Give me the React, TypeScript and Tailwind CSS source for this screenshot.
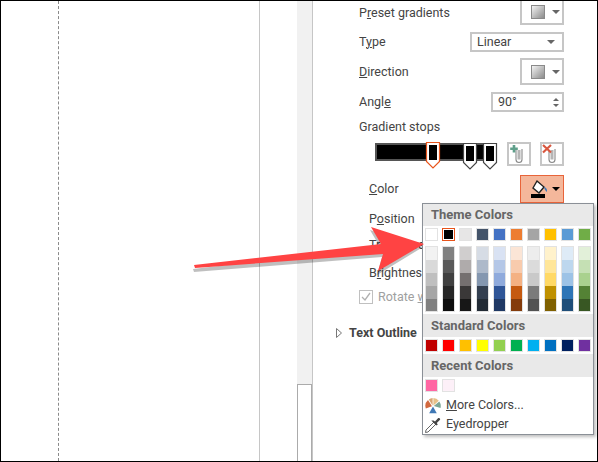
import React from "react";

const theme = ["#FFFFFF", "#000000", "#E7E6E6", "#44546A", "#4472C4", "#ED7D31", "#A5A5A5", "#FFC000", "#5B9BD5", "#70AD47"];
const shades = [
  ["#F2F2F2", "#D9D9D9", "#BFBFBF", "#A6A6A6", "#808080"],
  ["#808080", "#595959", "#404040", "#262626", "#0D0D0D"],
  ["#D0CECE", "#AFABAB", "#757070", "#3A3838", "#171717"],
  ["#D6DCE5", "#ADB9CA", "#8497B0", "#333F50", "#222B35"],
  ["#D9E2F3", "#B4C7E7", "#8FAADC", "#2F5597", "#1F3864"],
  ["#FBE5D6", "#F8CBAD", "#F4B183", "#C55A11", "#843C0C"],
  ["#EDEDED", "#DBDBDB", "#C9C9C9", "#7B7B7B", "#525252"],
  ["#FFF2CC", "#FFE699", "#FFD966", "#BF9000", "#7F6000"],
  ["#DEEBF7", "#BDD7EE", "#9DC3E6", "#2E75B6", "#1F4E79"],
  ["#E2F0D9", "#C5E0B4", "#A9D18E", "#548235", "#385723"],
];
const standard = ["#C00000", "#FF0000", "#FFC000", "#FFFF00", "#92D050", "#00B050", "#00B0F0", "#0070C0", "#002060", "#7030A0"];

function Swatch({ color, selected }: { color: string; selected?: boolean }) {
  return (
    <div
      className={selected ? "w-[13px] h-[13px] border border-[#E8541B] p-px bg-white" : "w-[13px] h-[13px] border border-[#E2E2E2] bg-white"}
    >
      <div className="w-full h-full" style={{ background: color }} />
    </div>
  );
}

function Caret() {
  return <div className="w-0 h-0 border-l-[4px] border-r-[4px] border-t-[4px] border-l-transparent border-r-transparent border-t-[#666]" />;
}

function GradientSquare() {
  return <div className="w-[14px] h-[14px] border border-[#8a8a8a] bg-gradient-to-br from-[#f4f4f4] to-[#8c8c8c]" />;
}

function IconButton({ noTop, h }: { noTop?: boolean; h: string }) {
  return (
    <div className={`${h} w-[44px] border-2 border-[#c6c6c6] ${noTop ? "border-t-0" : ""} flex items-center gap-[7px] pl-[9px] bg-white`}>
      <GradientSquare />
      <Caret />
    </div>
  );
}

function Clip({ kind }: { kind: "add" | "remove" }) {
  return (
    <svg width="20" height="20" viewBox="0 0 20 20">
      <path d="M7 6v9.500a3 3 0 0 0 6 0V5" fill="#fff" stroke="#8a8a8a" strokeWidth="1.1" />
      <path d="M10 6v9.500" stroke="#b5b5b5" strokeWidth="3" />
      {kind === "add" ? (
        <path d="M5 1v7.500M1.200 4.800h7.600" stroke="#5f9f8a" strokeWidth="2.600" />
      ) : (
        <path d="M1 1l8 7.500M9 1L1 8.500" stroke="#d9573f" strokeWidth="2.200" />
      )}
    </svg>
  );
}

function Stop({ selected, cls }: { selected?: boolean; cls: string }) {
  return (
    <svg className={`absolute ${cls}`} width="16" height="28" viewBox="0 0 16 28">
      <path d="M1.500 1.500h13v19L8 27 1.500 20.500z" fill="#fff" stroke={selected ? "#E8541B" : "#444"} strokeWidth="1.200" />
      <rect x="4" y="4" width="8" height="15" fill="#000" />
    </svg>
  );
}

function Heading({ children }: { children: React.ReactNode }) {
  return <div className="h-[23px] bg-[#e9e9e9] flex items-center pl-[8px] font-bold text-[13px] text-[#666]">{children}</div>;
}

export default function App() {
  return (
    <div className="relative w-[598px] h-[462px] border border-black bg-white overflow-hidden flex text-[12.5px] text-[#444]" style={{ fontFamily: "Roboto, sans-serif" }}>
      <div className="w-[58px] h-full border-r border-dashed border-[#8a8a8a] shrink-0" />
      <div className="w-[201px] h-full border-r border-[#c6c6c6] shrink-0" />
      <div className="w-[37px] shrink-0" />
      <div className="w-[16px] h-full bg-[#f1f1f1] border-r border-[#c6c6c6] shrink-0 flex flex-col justify-end">
        <div className="h-[78px] bg-white border border-[#ababab] -mb-px" />
      </div>

      <div className="flex-1 flex flex-col pl-[46px] pr-[33px] relative">
        <div className="h-[24px] flex items-center justify-between shrink-0">
          <span>
            P<u>r</u>eset gradients
          </span>
          <IconButton noTop h="h-[24px]" />
        </div>
        <div className="mt-[7px] h-[20px] flex items-center justify-between shrink-0">
          <span>
            T<u>y</u>pe
          </span>
          <div className="w-[94px] h-[20px] border-2 border-[#c6c6c6] flex items-center justify-between pl-[5px] pr-[7px]">
            <span>Linear</span>
            <Caret />
          </div>
        </div>
        <div className="mt-[6px] h-[27px] flex items-center justify-between shrink-0">
          <span className="pt-[2px]">
            <u>D</u>irection
          </span>
          <IconButton h="h-[27px]" />
        </div>
        <div className="mt-[7px] h-[20px] flex items-center justify-between shrink-0">
          <span>
            Angl<u>e</u>
          </span>
          <div className="w-[73px] h-[20px] border-2 border-[#c6c6c6] flex items-center justify-between pl-[5px] pr-[3px]">
            <span>90°</span>
            <div className="flex flex-col gap-[3px]">
              <div className="w-0 h-0 border-l-[3px] border-r-[3px] border-b-[3px] border-l-transparent border-r-transparent border-b-[#666]" />
              <div className="w-0 h-0 border-l-[3px] border-r-[3px] border-t-[3px] border-l-transparent border-r-transparent border-t-[#666]" />
            </div>
          </div>
        </div>
        <div className="mt-[6px] h-[18px] flex items-center shrink-0">Gradient stops</div>
        <div className="mt-[6px] h-[24px] flex justify-between shrink-0 pl-[16px] relative">
          <div className="w-[120px] h-[18px] mt-px border-2 border-[#555] outline outline-1 outline-white bg-black" />
          <Stop selected cls="left-[66px] -top-[1px]" />
          <Stop cls="left-[103px] top-0" />
          <Stop cls="left-[123px] top-0" />
          <div className="flex gap-[9px] ml-auto">
            <div className="w-[24px] h-[24px] border-2 border-[#c6c6c6] flex items-center justify-center">
              <Clip kind="add" />
            </div>
            <div className="w-[24px] h-[24px] border-2 border-[#c6c6c6] flex items-center justify-center">
              <Clip kind="remove" />
            </div>
          </div>
        </div>
        <div className="mt-[9px] h-[28px] flex items-center justify-between shrink-0 pl-[10px]">
          <span>
            <u>C</u>olor
          </span>
          <div className="w-[44px] h-[28px] bg-[#f4b79b] border border-[#e8643a] flex items-center gap-[3px] pl-[8px]">
            <svg width="20" height="20" viewBox="0 0 20 20">
              <path d="M8 2l7 6-5 6-6-5z" fill="#fff" stroke="#222" strokeWidth="1.400" />
              <path d="M15 8c2 .5 3.500 2 3 5-1-1-2.500-2-3-5z" fill="#3f78b5" />
              <rect x="2" y="15" width="14" height="4" fill="#000" />
            </svg>
            <div className="w-0 h-0 border-l-[4px] border-r-[4px] border-t-[4px] border-l-transparent border-r-transparent border-t-black" />
          </div>
        </div>
        <div className="mt-[7px] h-[18px] flex items-center pl-[10px] shrink-0 whitespace-nowrap">
          <span>
            P<u>o</u>sition
          </span>
        </div>
        <div className="mt-[8px] h-[18px] flex items-center pl-[10px] shrink-0 whitespace-nowrap">Transparency</div>
        <div className="mt-[10px] h-[18px] flex items-center pl-[10px] shrink-0 whitespace-nowrap">
          <span>
            B<u>r</u>ightness
          </span>
        </div>
        <div className="mt-[6px] h-[18px] flex items-center gap-[5px] shrink-0 whitespace-nowrap text-[#a0a0a0]">
          <div className="w-[14px] h-[14px] border border-[#c0c0c0] flex items-center justify-center">
            <svg width="12" height="12" viewBox="0 0 12 12">
              <path d="M2 6l3 3 5-7" fill="none" stroke="#b0b0b0" strokeWidth="1.300" />
            </svg>
          </div>
          <span>
            Rotate <u>w</u>ith shape
          </span>
        </div>
        <div className="mt-[18px] h-[18px] -ml-[23px] flex items-center gap-[7px] shrink-0 font-bold whitespace-nowrap">
          <svg width="6" height="10" viewBox="0 0 6 10">
            <path d="M.5.5l5 4.500-5 4.500z" fill="#fff" stroke="#777" />
          </svg>
          Text Outline
        </div>
      </div>

      <div className="absolute left-[421px] top-[202px] w-[172px] h-[232px] bg-white border border-[#8b9097] shadow-[2px_2px_3px_rgba(0,0,0,0.25)] flex flex-col">
        <Heading>Theme Colors</Heading>
        <div className="flex gap-[4px] pl-[2px] pt-[2px]">
          {theme.map((c, i) => (
            <Swatch key={c} color={c} selected={i === 1} />
          ))}
        </div>
        <div className="flex gap-[4px] pl-[2px] pt-[5px]">
          {shades.map((col, i) => (
            <div key={i} className="w-[13px] h-[66px] border border-[#E2E2E2] flex flex-col">
              {col.map((c) => (
                <div key={c} className="flex-1" style={{ background: c }} />
              ))}
            </div>
          ))}
        </div>
        <div className="mt-[2px]">
          <Heading>Standard Colors</Heading>
        </div>
        <div className="flex gap-[4px] pl-[2px] pt-[2px] pb-[2px]">
          {standard.map((c) => (
            <Swatch key={c} color={c} />
          ))}
        </div>
        <Heading>Recent Colors</Heading>
        <div className="flex gap-[4px] pl-[2px] pt-[2px]">
          <Swatch color="#FF66A3" />
          <Swatch color="#FDF0F8" />
        </div>
        <div className="h-[20px] mt-[4px] flex items-center gap-[5px] pl-[2px]">
          <svg width="16" height="16" viewBox="0 0 16 16">
            <path d="M7.600 7.400L3.800 1.600A7.500 7.500 0 0 1 7.600 0z" fill="#d8a574" />
            <path d="M8.400 7.400V0a7.500 7.500 0 0 1 5.400 2.800z" fill="#e6c088" />
            <path d="M8.800 8l5.500-4.500A8 8 0 0 1 15.500 10z" fill="#7aa595" />
            <path d="M8 8.500l3.800 6.800h-7.600z" fill="#3f78b5" />
            <path d="M7 8.200L.8 10.400A8 8 0 0 1 3 2z" fill="#d2693f" />
          </svg>
          <span>
            <u>M</u>ore Colors...
          </span>
        </div>
        <div className="h-[19px] flex items-center gap-[4px] pl-[1px]">
          <svg width="18" height="18" viewBox="0 0 18 18">
            <path d="M1.500 16.500L2 14l8-8 2 2-8 8z" fill="#fff" stroke="#666" strokeWidth="1" />
            <path d="M9.500 4.500l1.500 1L14 2.300c1.200-1.200 3 .5 1.800 1.800L12.800 7l1 1.500-1.500 1-5-5z" fill="#444" />
          </svg>
          <span>Eyedropper</span>
        </div>
      </div>

      <svg className="absolute left-[185px] top-[220px]" width="245" height="60" viewBox="0 0 245 60">
        <path d="M8 45 L195 23 L185 6 L238 23 L192 51 L197 33 L9 48 Z" fill="#000" opacity="0.25" transform="translate(-1 3)" />
        <path d="M8 44 L195 23 L185 6 L238 23 L192 50 L197 33 L9 47 Z" fill="#FF4343" />
      </svg>
    </div>
  );
}
